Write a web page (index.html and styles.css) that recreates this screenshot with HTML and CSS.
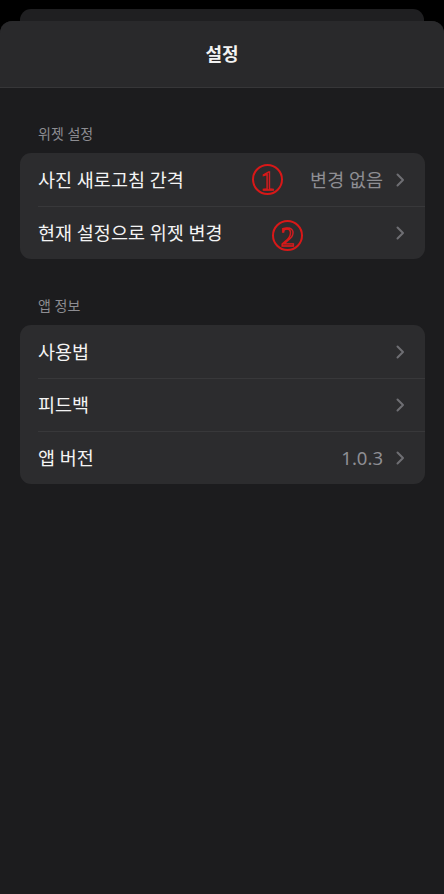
FILE: index.html
```html
<!DOCTYPE html>
<html lang="ko">
<head>
<meta charset="utf-8">
<link rel="stylesheet" href="styles.css">
</head>
<body>
<div class="back-card"></div>
<div class="sheet">
  <header class="sheet-header"><h1 class="title">설정</h1></header>
  <main class="content">
    <section class="group">
      <div class="group-label">위젯 설정</div>
      <div class="card">
        <div class="row">
          <span class="row-title">사진 새로고침 간격</span>
          <span class="row-value">변경 없음</span>
          <svg class="chev" viewBox="0 0 9 14" width="9" height="14"><path d="M1.5 1.5 L7 7 L1.5 12.5" fill="none" stroke="currentColor" stroke-width="2" stroke-linecap="round" stroke-linejoin="round"/></svg>
          <span class="mark mark-1"><span class="mark-digit">1</span></span>
        </div>
        <div class="row">
          <span class="row-title">현재 설정으로 위젯 변경</span>
          <span class="row-value"></span>
          <svg class="chev" viewBox="0 0 9 14" width="9" height="14"><path d="M1.5 1.5 L7 7 L1.5 12.5" fill="none" stroke="currentColor" stroke-width="2" stroke-linecap="round" stroke-linejoin="round"/></svg>
          <span class="mark mark-2"><span class="mark-digit">2</span></span>
        </div>
      </div>
    </section>
    <section class="group">
      <div class="group-label">앱 정보</div>
      <div class="card">
        <div class="row">
          <span class="row-title">사용법</span>
          <span class="row-value"></span>
          <svg class="chev" viewBox="0 0 9 14" width="9" height="14"><path d="M1.5 1.5 L7 7 L1.5 12.5" fill="none" stroke="currentColor" stroke-width="2" stroke-linecap="round" stroke-linejoin="round"/></svg>
        </div>
        <div class="row">
          <span class="row-title">피드백</span>
          <span class="row-value"></span>
          <svg class="chev" viewBox="0 0 9 14" width="9" height="14"><path d="M1.5 1.5 L7 7 L1.5 12.5" fill="none" stroke="currentColor" stroke-width="2" stroke-linecap="round" stroke-linejoin="round"/></svg>
        </div>
        <div class="row">
          <span class="row-title">앱 버전</span>
          <span class="row-value">1.0.3</span>
          <svg class="chev" viewBox="0 0 9 14" width="9" height="14"><path d="M1.5 1.5 L7 7 L1.5 12.5" fill="none" stroke="currentColor" stroke-width="2" stroke-linecap="round" stroke-linejoin="round"/></svg>
        </div>
      </div>
    </section>
  </main>
</div>
</body>
</html>
```
FILE: styles.css
```css
* { box-sizing: border-box; }
html, body { margin: 0; padding: 0; height: 100%; }
body {
  background: #000;
  font-family: "Noto Sans", "Noto Sans CJK KR", sans-serif;
  color: #fff;
  display: flex;
  flex-direction: column;
  overflow: hidden;
}
.back-card {
  margin: 9px 20px 0;
  height: 12px;
  flex: none;
  background: #1f1f21;
  border-radius: 11px 11px 0 0;
}
.sheet {
  flex: 1;
  display: flex;
  flex-direction: column;
  background: #1c1c1e;
  border-radius: 12px 12px 0 0;
  overflow: hidden;
}
.sheet-header {
  height: 67px;
  flex: none;
  background: #29292b;
  border-bottom: 1px solid #363638;
  display: flex;
  align-items: center;
  justify-content: center;
}
.title {
  margin: 0;
  font-size: 18px;
  font-weight: 700;
  line-height: 24px;
  color: #f2f2f2;
}
.content {
  display: flex;
  flex-direction: column;
  gap: 38px;
  padding: 37px 19px 0 20px;
}
.group { display: flex; flex-direction: column; gap: 10px; }
.group-label {
  padding-left: 18px;
  font-size: 14px;
  line-height: 18px;
  color: #8d8d92;
}
.card {
  background: #2c2c2e;
  border-radius: 11px;
  overflow: hidden;
  display: flex;
  flex-direction: column;
}
.row {
  position: relative;
  height: 53px;
  display: flex;
  align-items: center;
  padding: 0 20px 0 18px;
}
.row + .row::before {
  content: "";
  position: absolute;
  left: 18px;
  right: 0;
  top: 0;
  border-top: 1px solid #38383a;
}
.row-title {
  flex: 1;
  font-size: 18.5px;
  line-height: 24px;
  color: #f4f4f4;
}
.row-value {
  font-size: 18.5px;
  line-height: 24px;
  color: #8e8e93;
  margin-right: 13px;
}
.chev { color: #6e6e73; flex: none; }
.mark {
  position: absolute;
  width: 31px;
  height: 31px;
  border: 2px solid #d81818;
  border-radius: 50%;
  display: flex;
  align-items: center;
  justify-content: center;
}
.mark-1 { left: 232px; top: 11px; }
.mark-2 { left: 252px; top: 14px; }
.mark-digit {
  font-family: "Liberation Serif", serif;
  font-size: 28px;
  line-height: 1;
  color: transparent;
  -webkit-text-stroke: 1.3px #d81818;
  margin-top: 2px;
}
```
